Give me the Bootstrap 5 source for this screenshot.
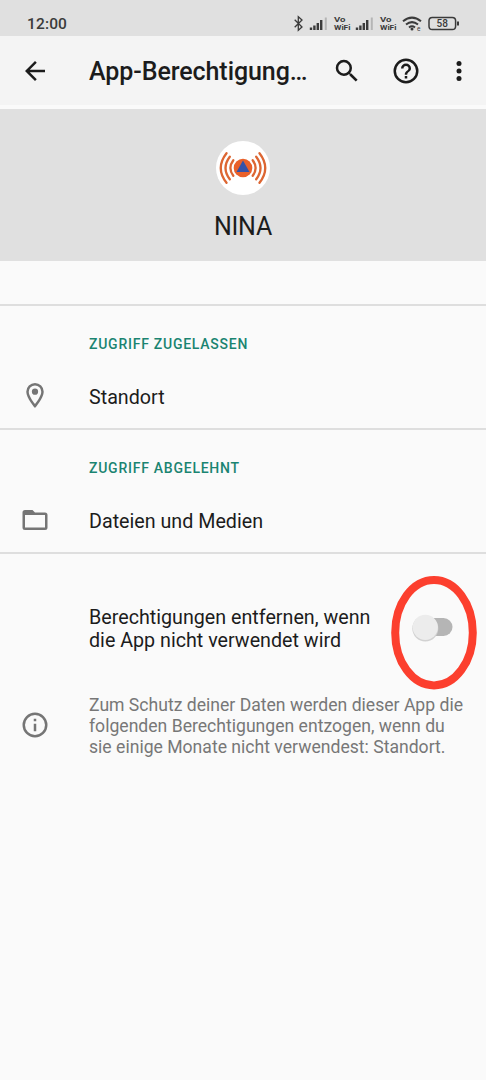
<!DOCTYPE html>
<html lang="de">
<head>
<meta charset="utf-8">
<meta name="viewport" content="width=device-width, initial-scale=1">
<title>App-Berechtigungen</title>
<link rel="stylesheet" href="https://cdn.jsdelivr.net/npm/bootstrap@5.3.0/dist/css/bootstrap.min.css">
<style>
body{font-family:Roboto,"Liberation Sans",sans-serif;background:#fafafa;color:#1c1c1c;height:1080px;overflow:hidden}
svg{display:block;flex:none}
.status{height:36px;background:#e0e0e0;padding:12px 27px 0 27px;color:#3b3b3b}
.clock{font-size:15.5px;line-height:24px;font-weight:500;letter-spacing:.15px}
.topbar{height:69px;background:#f4f4f4;padding:0 12.5px 0 19.5px}
.topbar h1{font-size:25px;line-height:30px;font-weight:500;letter-spacing:-.07px;margin:3px 0 0 39.5px;width:218px;white-space:nowrap}
.apphead{height:152px;margin-top:4px;background:#e0e0e0;padding-top:32px}
.appname{font-size:25px;line-height:30px;letter-spacing:-.2px;margin-top:17px}
.perm{height:124px;border-top:2px solid #dedede}
.perm h2{font-size:14px;line-height:16px;font-weight:500;letter-spacing:.75px;color:#1a8471;margin:30px 0 0 89px}
.line{padding-left:19.5px}
.label{font-size:19.7px;line-height:23px;margin-left:39.5px;padding-top:3px;white-space:nowrap}
.note{font-size:17.6px;line-height:20.8px;color:#777;margin-left:39.5px;padding-top:2px;white-space:nowrap}
.auto{border-top:2px solid #dedede;height:141px;padding-left:89px}
.auto .label{margin-top:7px}
.toggle{width:86px;height:114px;margin:18px 9px 0 auto}
</style>
</head>
<body>
<header class="status d-flex justify-content-between">
  <span class="clock">12:00</span>
  <svg style="margin-right:-1px" width="168" height="24" viewBox="292 12 168 24" fill="none" stroke="#3b3b3b">
    <path d="M294.7 19.7l7.3 7.3-3.7 3.3V16.7l3.7 3.3-7.3 7.2" stroke-width="1.3"/>
    <g stroke-width="2.4"><path d="M311 30v-2.500M314.400 30v-4.500M317.800 30v-7M321.200 30v-10"/><path d="M325.800 30V17.500" stroke="#b5b5b5" stroke-width="2"/></g>
    <g stroke-width="2.4"><path d="M357 30v-2.500M360.400 30v-4.500M363.800 30v-7M367.200 30v-10"/><path d="M371.800 30V17.500" stroke="#b5b5b5" stroke-width="2"/></g>
    <g fill="#3b3b3b" stroke="none" font-family="Roboto,sans-serif" font-weight="700" font-size="7.5">
      <text x="334" y="21.800" textLength="11.500" lengthAdjust="spacingAndGlyphs">Vo</text><text x="334" y="30.300" textLength="16.500" lengthAdjust="spacingAndGlyphs">WiFi</text>
      <text x="380" y="21.800" textLength="11.500" lengthAdjust="spacingAndGlyphs">Vo</text><text x="380" y="30.300" textLength="16.500" lengthAdjust="spacingAndGlyphs">WiFi</text>
      <text x="417" y="31" font-size="6.500" font-weight="400">e</text>
    </g>
    <path d="M403 21.300q9-7.400 18 0M406 24.600q6-5 12 0M409 27.500q3-2.400 6 0" stroke-width="2"/>
    <circle cx="412" cy="29" r="1.500" fill="#3b3b3b" stroke="none"/>
    <rect x="429" y="17.400" width="26.600" height="12.200" rx="3.300" stroke-width="1.500"/>
    <path d="M458 21.500v4" stroke-width="2"/>
    <text x="442.300" y="27.200" text-anchor="middle" fill="#3b3b3b" stroke="none" font-family="Roboto,sans-serif" font-weight="500" font-size="10">58</text>
  </svg>
</header>
<nav class="topbar d-flex align-items-center">
  <svg width="30" height="30" viewBox="0 0 24 24" fill="#1c1c1c"><path d="M20 11H7.830l5.590-5.590L12 4l-8 8 8 8 1.410-1.410L7.830 13H20z"/></svg>
  <h1>App-Berechtigung…</h1>
  <svg style="margin-left:25px" width="30" height="30" viewBox="0 0 24 24" fill="#1c1c1c"><path d="M15.500 14h-.79l-.28-.27A6.470 6.470 0 0 0 16 9.500 6.500 6.500 0 1 0 9.500 16c1.610 0 3.090-.59 4.230-1.570l.27.28v.79l5 4.990L20.490 19zM9.500 14a4.500 4.500 0 1 1 0-9 4.500 4.500 0 0 1 0 9z"/></svg>
  <svg class="ms-auto" width="30" height="30" viewBox="0 0 24 24" fill="#1c1c1c"><path d="M11 18h2v-2h-2zm1-16a10 10 0 1 0 0 20 10 10 0 0 0 0-20zm0 18a8 8 0 1 1 0-16 8 8 0 0 1 0 16zm0-14a4 4 0 0 0-4 4h2a2 2 0 1 1 4 0c0 2-3 1.750-3 5h2c0-2.250 3-2.500 3-5a4 4 0 0 0-4-4z"/></svg>
  <svg style="margin-left:22.500px" width="30" height="30" viewBox="0 0 24 24" fill="#1c1c1c"><circle cx="12" cy="6" r="2"/><circle cx="12" cy="12" r="2"/><circle cx="12" cy="18" r="2"/></svg>
</nav>
<section class="apphead d-flex flex-column align-items-center">
  <svg width="54" height="54" viewBox="0 0 54 54">
    <circle cx="27" cy="27" r="27" fill="#fff"/>
    <circle cx="27" cy="27" r="9.300" fill="#e9602a"/><path d="M27 19.500l6.500 11.500h-13z" fill="#3552a8"/>
    <g fill="none" stroke="#dd6632" stroke-width="2.300" stroke-linecap="round">
      <path d="M17.300 19.200q-5.800 7.800 0 15.600M13.800 15.700q-8.600 11.300 0 22.600M10.500 12.200q-11.500 14.800 0 29.600"/>
      <path d="M36.700 19.200q5.800 7.800 0 15.600M40.200 15.700q8.600 11.300 0 22.600M43.500 12.200q11.500 14.800 0 29.600"/>
    </g>
  </svg>
  <div class="appname">NINA</div>
</section>
<main style="padding-top:43px">
  <section class="perm">
    <h2>ZUGRIFF ZUGELASSEN</h2>
    <div class="line d-flex align-items-center" style="margin-top:29px">
      <svg width="30" height="30" viewBox="0 0 24 24" fill="#757575"><path d="M12 1.500a7 7 0 0 0-7 7c0 5.250 7 13 7 13s7-7.750 7-13a7 7 0 0 0-7-7zM7 8.500a5 5 0 0 1 10 0c0 2.880-2.880 7.190-5 9.880C9.920 15.710 7 11.350 7 8.500z"/><circle cx="12" cy="8.500" r="2.500"/></svg>
      <span class="label">Standort</span>
    </div>
  </section>
  <section class="perm">
    <h2>ZUGRIFF ABGELEHNT</h2>
    <div class="line d-flex align-items-center" style="margin-top:29px">
      <svg width="30" height="30" viewBox="0 0 24 24" fill="#757575"><path d="M20 6h-8l-2-2H4a2 2 0 0 0-2 2v12a2 2 0 0 0 2 2h16a2 2 0 0 0 2-2V8a2 2 0 0 0-2-2zm0 12H4V8h16z"/></svg>
      <span class="label">Dateien und Medien</span>
    </div>
  </section>
  <section class="auto d-flex align-items-center">
    <span class="label ms-0">Berechtigungen entfernen, wenn<br>die App nicht verwendet wird</span>
    <svg class="toggle" viewBox="391 576 86 114">
      <ellipse cx="434" cy="632.700" rx="38.800" ry="52.700" fill="none" stroke="#fc3f2e" stroke-width="8"/>
      <rect x="416" y="618" width="36.500" height="18" rx="9" fill="#b5b5b5"/>
      <circle cx="425.300" cy="628.500" r="13" fill="#d2d2d2"/><circle cx="425.300" cy="627.300" r="12.600" fill="#ececec"/>
    </svg>
  </section>
  <div class="line d-flex align-items-center">
    <svg width="30" height="30" viewBox="0 0 24 24" fill="#757575"><path d="M11 7h2v2h-2zm0 4h2v6h-2zm1-9a10 10 0 1 0 0 20 10 10 0 0 0 0-20zm0 18a8 8 0 1 1 0-16 8 8 0 0 1 0 16z"/></svg>
    <p class="note mb-0">Zum Schutz deiner Daten werden dieser App die<br>folgenden Berechtigungen entzogen, wenn du<br>sie einige Monate nicht verwendest: Standort.</p>
  </div>
</main>
<script src="https://cdn.jsdelivr.net/npm/bootstrap@5.3.0/dist/js/bootstrap.bundle.min.js"></script>
</body>
</html>
